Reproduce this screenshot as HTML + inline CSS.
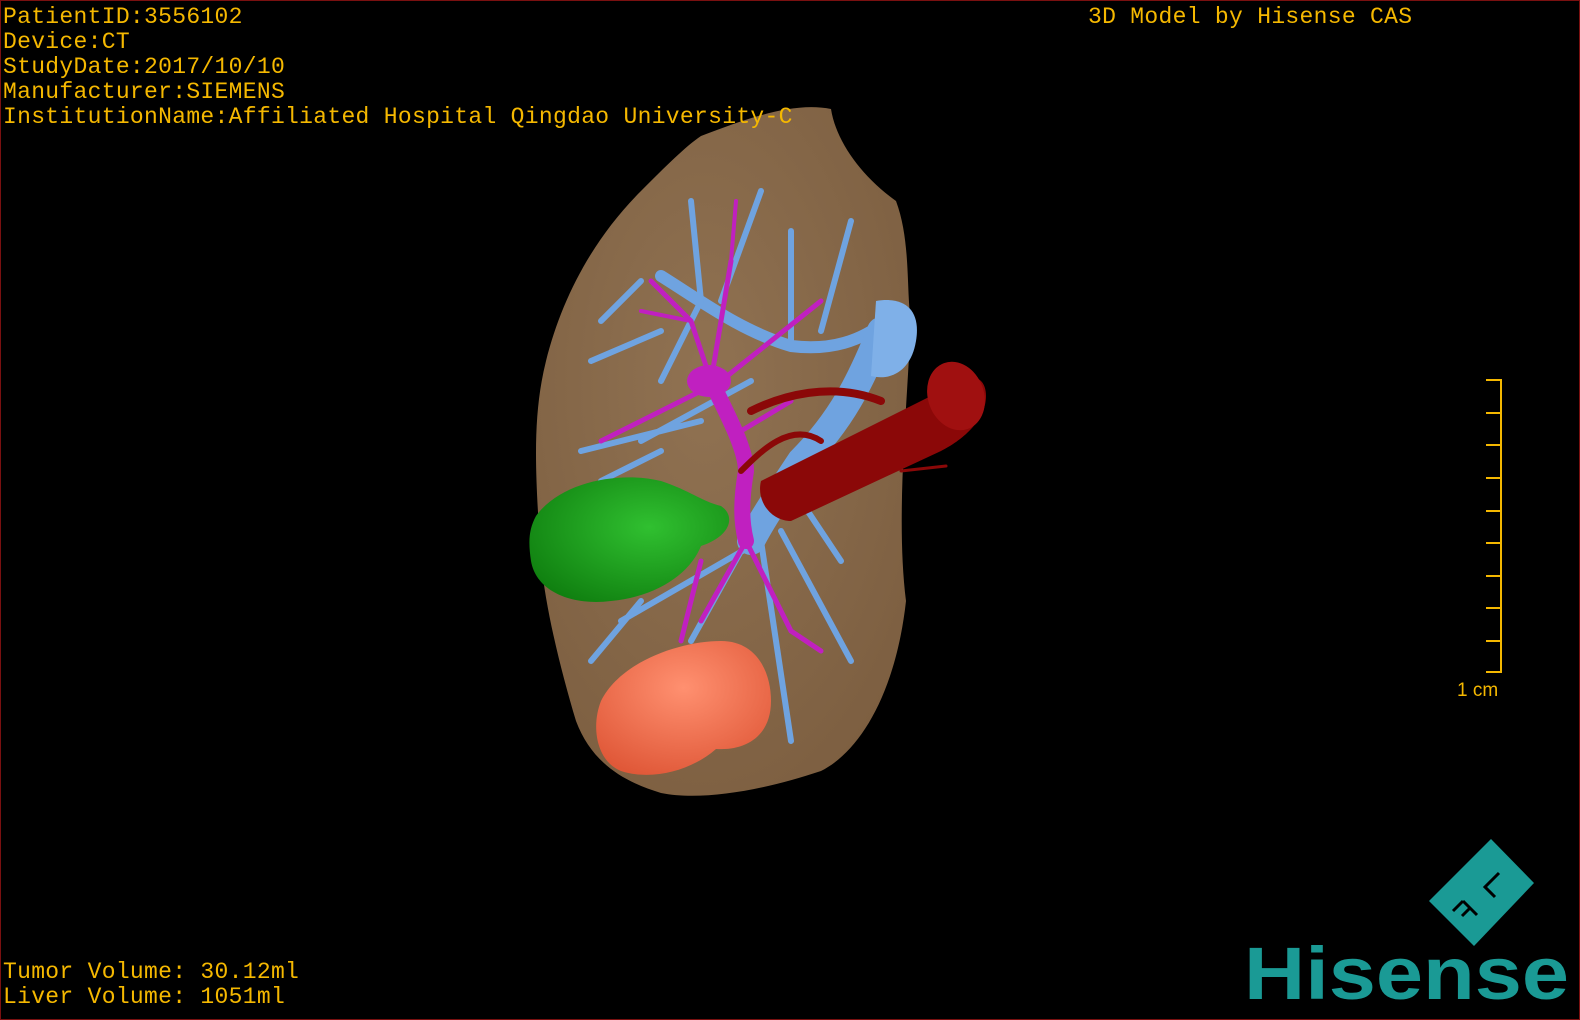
<!DOCTYPE html>
<html><head><style>
html,body{margin:0;padding:0;background:#000;}
#s{position:relative;width:1580px;height:1020px;background:#000;box-sizing:border-box;border:1px solid #7a1010;overflow:hidden;}
.t{position:absolute;color:#f5b800;font-family:"Liberation Mono",monospace;font-size:23px;line-height:25px;white-space:pre;letter-spacing:0.3px;}
</style></head><body><div id="s">
<svg width="1580" height="1020" style="position:absolute;left:0;top:0">
<defs>
<radialGradient id="lv" cx="0.45" cy="0.4" r="0.7"><stop offset="0" stop-color="#907252"/><stop offset="1" stop-color="#7c5e40"/></radialGradient>
<radialGradient id="gr" cx="0.6" cy="0.4" r="0.7"><stop offset="0" stop-color="#30c030"/><stop offset="1" stop-color="#108010"/></radialGradient>
<radialGradient id="or" cx="0.5" cy="0.35" r="0.7"><stop offset="0" stop-color="#ff9070"/><stop offset="1" stop-color="#e05838"/></radialGradient>
</defs>
<path d="M700,135 C740,120 790,100 830,108 C835,140 860,175 895,200 C910,240 905,290 910,320 C905,420 895,520 905,600 C895,690 860,750 820,770 C760,790 700,800 660,792 C620,780 590,760 575,720 C560,670 545,610 540,560 C535,480 530,420 545,360 C560,300 590,240 640,190 C665,165 685,145 700,135 Z" fill="url(#lv)"/>
<g stroke="#6fa3e0" stroke-linecap="round" fill="none">
<path d="M885,320 C860,340 830,350 790,345 C740,330 700,300 660,275" stroke-width="12"/>
<path d="M880,330 C860,380 840,420 800,460 C780,490 760,520 750,540" stroke-width="28"/>
<path d="M700,300 L690,200 M720,300 L760,190 M640,280 L600,320 M660,330 L590,360 M790,345 L790,230 M820,330 L850,220 M750,380 L640,440 M700,420 L580,450 M660,450 L600,480 M750,545 L620,620 M740,550 L690,640 M760,540 L790,740 M780,530 L850,660 M800,500 L840,560 M640,600 L590,660 M700,300 L660,380" stroke-width="6"/>
</g>
<path d="M875,300 C905,295 920,310 915,340 C910,370 890,380 870,375 Z" fill="#7fb0e8"/>
<g stroke="#c020c0" stroke-linecap="round" fill="none">
<path d="M710,380 C730,420 745,450 745,470 C740,500 740,520 745,540" stroke-width="16"/>
<path d="M710,380 L730,260 M710,380 L690,320 L650,280 M720,380 L820,300 M700,390 L600,440 M740,430 L790,400 M745,540 L700,620 M745,540 L790,630 L820,650 M700,560 L680,640" stroke-width="5"/>
<path d="M735,200 L730,260 M690,320 L640,310" stroke-width="4"/>
</g>
<ellipse cx="708" cy="380" rx="22" ry="16" fill="#c020c0"/>
<path d="M760,480 L940,390 C960,370 985,370 985,395 C985,420 960,440 940,450 L790,520 C770,520 755,500 760,480 Z" fill="#8b0808"/>
<ellipse cx="955" cy="395" rx="28" ry="35" fill="#a01010" transform="rotate(-20 955 395)"/>
<g stroke="#8b0808" fill="none" stroke-linecap="round">
<path d="M880,400 C830,380 780,395 750,410" stroke-width="8"/>
<path d="M820,440 C790,420 760,450 740,470" stroke-width="6"/>
<path d="M900,470 L945,465" stroke-width="3"/>
</g>
<path d="M535,515 C560,480 620,470 660,480 C690,490 700,500 720,505 C735,515 730,535 700,545 C690,570 660,595 610,600 C570,605 535,590 530,560 C527,540 528,528 535,515 Z" fill="url(#gr)"/>
<path d="M600,700 C620,660 680,640 720,640 C755,640 770,670 770,700 C770,735 745,750 715,748 C690,770 650,780 620,770 C595,760 590,725 600,700 Z" fill="url(#or)"/>
<g stroke="#f5b800" stroke-width="2">
<line x1="1500" y1="378" x2="1500" y2="672"/>
<line x1="1485" y1="379" x2="1500" y2="379"/><line x1="1485" y1="412" x2="1500" y2="412"/><line x1="1485" y1="444" x2="1500" y2="444"/><line x1="1485" y1="477" x2="1500" y2="477"/><line x1="1485" y1="510" x2="1500" y2="510"/><line x1="1485" y1="542" x2="1500" y2="542"/><line x1="1485" y1="575" x2="1500" y2="575"/><line x1="1485" y1="607" x2="1500" y2="607"/><line x1="1485" y1="640" x2="1500" y2="640"/><line x1="1485" y1="671" x2="1500" y2="671"/>
</g>
<text x="1456" y="695" fill="#f5b800" font-family="Liberation Sans,sans-serif" font-size="19">1 cm</text>
<polygon points="1490,838 1533,882 1473,945 1428,900" fill="#1a9a95"/>
<g stroke="#000" stroke-width="3" fill="none">
<path d="M1462,900 L1476,914 M1462,900 L1452,910 M1469,907 L1461,915"/>
<path d="M1498,872 L1484,886 L1494,896"/>
</g>
<text x="1243" y="998" fill="#1a9a95" font-family="Liberation Sans,sans-serif" font-weight="bold" font-size="74" textLength="325" lengthAdjust="spacingAndGlyphs">Hisense</text>
</svg>
<div class="t" style="left:2px;top:4px">PatientID:3556102
Device:CT
StudyDate:2017/10/10
Manufacturer:SIEMENS
InstitutionName:Affiliated Hospital Qingdao University-C</div>
<div class="t" style="left:1087px;top:4px">3D Model by Hisense CAS</div>
<div class="t" style="left:2px;top:959px">Tumor Volume: 30.12ml
Liver Volume: 1051ml</div>
</div></body></html>
